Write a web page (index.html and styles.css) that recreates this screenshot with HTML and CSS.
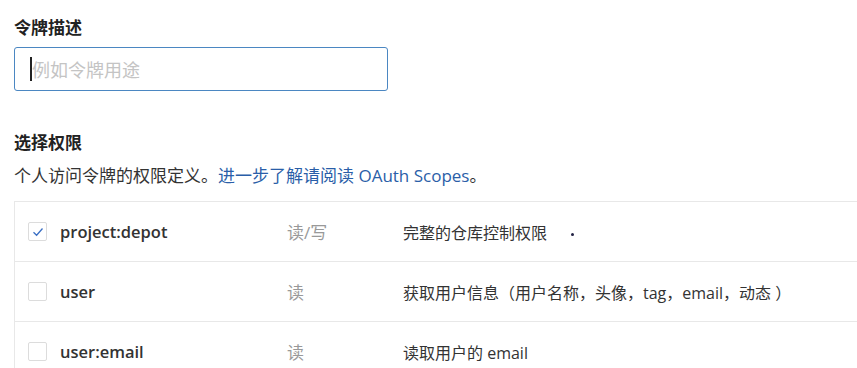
FILE: index.html
```html
<!DOCTYPE html>
<html lang="zh-CN">
<head>
<meta charset="utf-8" />
<title>个人访问令牌</title>
<link rel="stylesheet" href="styles.css">
</head>
<body class="page">
	<div class="field">
		<div class="label">令牌描述</div>
		<div class="input"><span class="caret"></span><span class="placeholder">例如令牌用途</span></div>
	</div>
	<div class="field">
		<div class="label">选择权限</div>
		<div class="hint">个人访问令牌的权限定义。<a class="link" href="#">进一步了解请阅读 OAuth Scopes</a>。</div>
	</div>
	<div class="scopes">
		<div class="row">
			<span class="check checked">
				<svg width="12" height="10" viewBox="0 0 12 10"><path d="M1.5 5.2 L4.6 8.2 L10.5 1.5" fill="none" stroke="#3a6fc4" stroke-width="1.3"/></svg>
			</span>
			<span class="name">project:depot</span>
			<span class="access">读/写</span>
			<span class="desc">完整的仓库控制权限<span class="dot"></span></span>
		</div>
		<div class="row">
			<span class="check"></span>
			<span class="name">user</span>
			<span class="access">读</span>
			<span class="desc">获取用户信息（用户名称，头像，tag，email，动态 ）</span>
		</div>
		<div class="row">
			<span class="check"></span>
			<span class="name">user:email</span>
			<span class="access">读</span>
			<span class="desc">读取用户的 email</span>
		</div>
	</div>
</body>
</html>
```

FILE: styles.css
```css
html {
	width: 100%;
	height: 100%;
}

.page {
	margin: 0;
	padding: 16px 0 0 14px;
	background-color: #FFFFFF;
	color: #333333;
	font-family: "Open Sans", "Noto Sans CJK SC", sans-serif;
	overflow: hidden;
}

.field {
	margin-bottom: 40px;
}

.field + .field {
	margin-bottom: 13px;
}

.label {
	font-size: 17px;
	font-weight: 700;
	color: #222222;
	line-height: 24px;
	margin-bottom: 7px;
}

.field + .field .label {
	margin-bottom: 9px;
}

.input {
	width: 357px;
	height: 42px;
	border: 1px solid #4b87c2;
	border-radius: 3px;
	display: flex;
	align-items: center;
	padding-left: 15px;
}

.caret {
	width: 2px;
	height: 24px;
	background: #222222;
}

.placeholder {
	font-size: 18px;
	color: #c4c4c4;
}

.hint {
	font-size: 17px;
	line-height: 24px;
	color: #333333;
}

.link {
	color: #2a5ea8;
	text-decoration: none;
}

.scopes {
	border-top: 1px solid #e8e8e8;
	border-left: 1px solid #e8e8e8;
}

.row {
	display: flex;
	align-items: center;
	height: 59px;
	padding-left: 13px;
	border-bottom: 1px solid #e8e8e8;
}

.check {
	width: 17px;
	height: 17px;
	border: 1px solid #dcdcdc;
	border-radius: 2px;
	display: flex;
	align-items: center;
	justify-content: center;
	flex-shrink: 0;
}

.name {
	width: 227px;
	margin-left: 13px;
	font-size: 16.5px;
	font-weight: 600;
	color: #333333;
}

.access {
	width: 116px;
	font-size: 17px;
	color: #999999;
}

.desc {
	font-size: 16px;
	color: #333333;
}

.dot {
	display: inline-block;
	width: 3px;
	height: 3px;
	background: #222244;
	border-radius: 50%;
	margin-left: 24px;
	vertical-align: middle;
}
```
